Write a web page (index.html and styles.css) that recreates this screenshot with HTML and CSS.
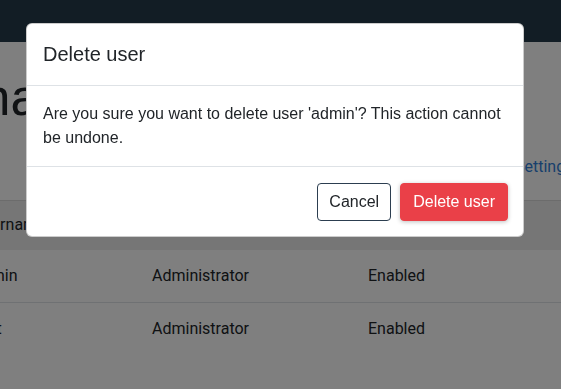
FILE: index.html
```html
<!DOCTYPE html>
<html lang="en">
<head>
  <meta charset="UTF-8">
  <meta name="viewport" content="width=device-width, initial-scale=1.0">
  <title>Users - Delete user</title>
  <link rel="stylesheet" href="styles.css">
</head>
<body>
  <nav class="navbar"></nav>

  <!-- page behind the dialog -->
  <main class="page">
    <h1 class="page-title">User management</h1>
    <div class="toolbar">
      <a class="toolbar-link" href="#">Settings</a>
    </div>
    <table class="users">
      <thead>
        <tr>
          <th class="col-name">Username</th>
          <th class="col-role">Role</th>
          <th>Status</th>
        </tr>
      </thead>
      <tbody>
        <tr>
          <td>admin</td>
          <td>Administrator</td>
          <td>Enabled</td>
        </tr>
        <tr>
          <td>root</td>
          <td>Administrator</td>
          <td>Enabled</td>
        </tr>
      </tbody>
    </table>
  </main>

  <!-- confirm dialog -->
  <div class="modal">
    <div class="modal-dialog">
      <div class="modal-header">
        <h5 class="modal-title">Delete user</h5>
      </div>
      <div class="modal-body">
        Are you sure you want to delete user 'admin'? This action cannot be undone.
      </div>
      <div class="modal-footer">
        <button class="btn btn-cancel">Cancel</button>
        <button class="btn btn-danger">Delete user</button>
      </div>
    </div>
  </div>
</body>
</html>
```

FILE: styles.css
```css
/* page */
body {
  margin: 0;
  font-family: Roboto, "Liberation Sans", sans-serif;
  color: #212529;
  background: #fff;
  overflow: hidden;
  height: 389px;
}
.navbar {
  height: 42px;
  background-color: #243a4a;
}
.page {
  width: 620px;
  margin-left: -35px;
}
.page-title {
  margin: 0;
  padding: 23px 0 0 0;
  height: 64px;
  font-family: "Liberation Sans", sans-serif;
  font-size: 52px;
  font-weight: 400;
  line-height: 64px;
  white-space: nowrap;
  text-indent: -180px;
}
.toolbar {
  display: flex;
  height: 71px;
  box-sizing: border-box;
  align-items: center;
  padding-left: 550px;
}
.toolbar-link {
  color: #2f7fd8;
  text-decoration: none;
  font-size: 16px;
  padding-top: 3px;
}
.users {
  width: 100%;
  border-collapse: collapse;
  font-size: 16px;
}
.users th,
.users td {
  text-align: left;
  padding: 14px 8px;
  line-height: 24px;
  font-weight: 400;
}
.users thead tr {
  background-color: #ececec;
  border-top: 1px solid #d8d8d8;
}
.users th {
  padding: 12px 8px 13px;
}
.users tbody tr:first-child {
  border-bottom: 1px solid #dee2e6;
}
.col-name {
  width: 163px;
}
.col-role {
  width: 200px;
}

/* dialog */
.modal {
  position: fixed;
  inset: 0;
  background-color: rgba(0, 0, 0, 0.5);
  font-family: "Liberation Sans", Arial, sans-serif;
}
.modal-dialog {
  width: 498px;
  margin: 23px 0 0 26px;
  background: #fff;
  border: 1px solid rgba(0, 0, 0, 0.2);
  border-radius: 6px;
  box-sizing: border-box;
}
.modal-header {
  padding: 15px 16px 16px;
  border-bottom: 1px solid #dee2e6;
}
.modal-title {
  margin: 0;
  font-size: 20px;
  font-weight: 400;
  line-height: 30px;
}
.modal-body {
  padding: 16px;
  font-size: 16px;
  line-height: 24px;
}
.modal-footer {
  display: flex;
  justify-content: flex-end;
  gap: 9px;
  padding: 16px 15px 15px;
  border-top: 1px solid #dee2e6;
}
.btn {
  font-family: inherit;
  font-size: 16px;
  line-height: 24px;
  padding: 6px 12px;
  border-radius: 4px;
  cursor: pointer;
}
.btn-cancel {
  padding: 6px 11px;
  background: #fff;
  color: #212529;
  border: 1px solid #2c3e50;
}
.btn-danger {
  background-color: #ea4048;
  color: #fff;
  border: 1px solid #ea4048;
  box-shadow: 0 1px 4px rgba(0, 0, 0, 0.25);
}
```
